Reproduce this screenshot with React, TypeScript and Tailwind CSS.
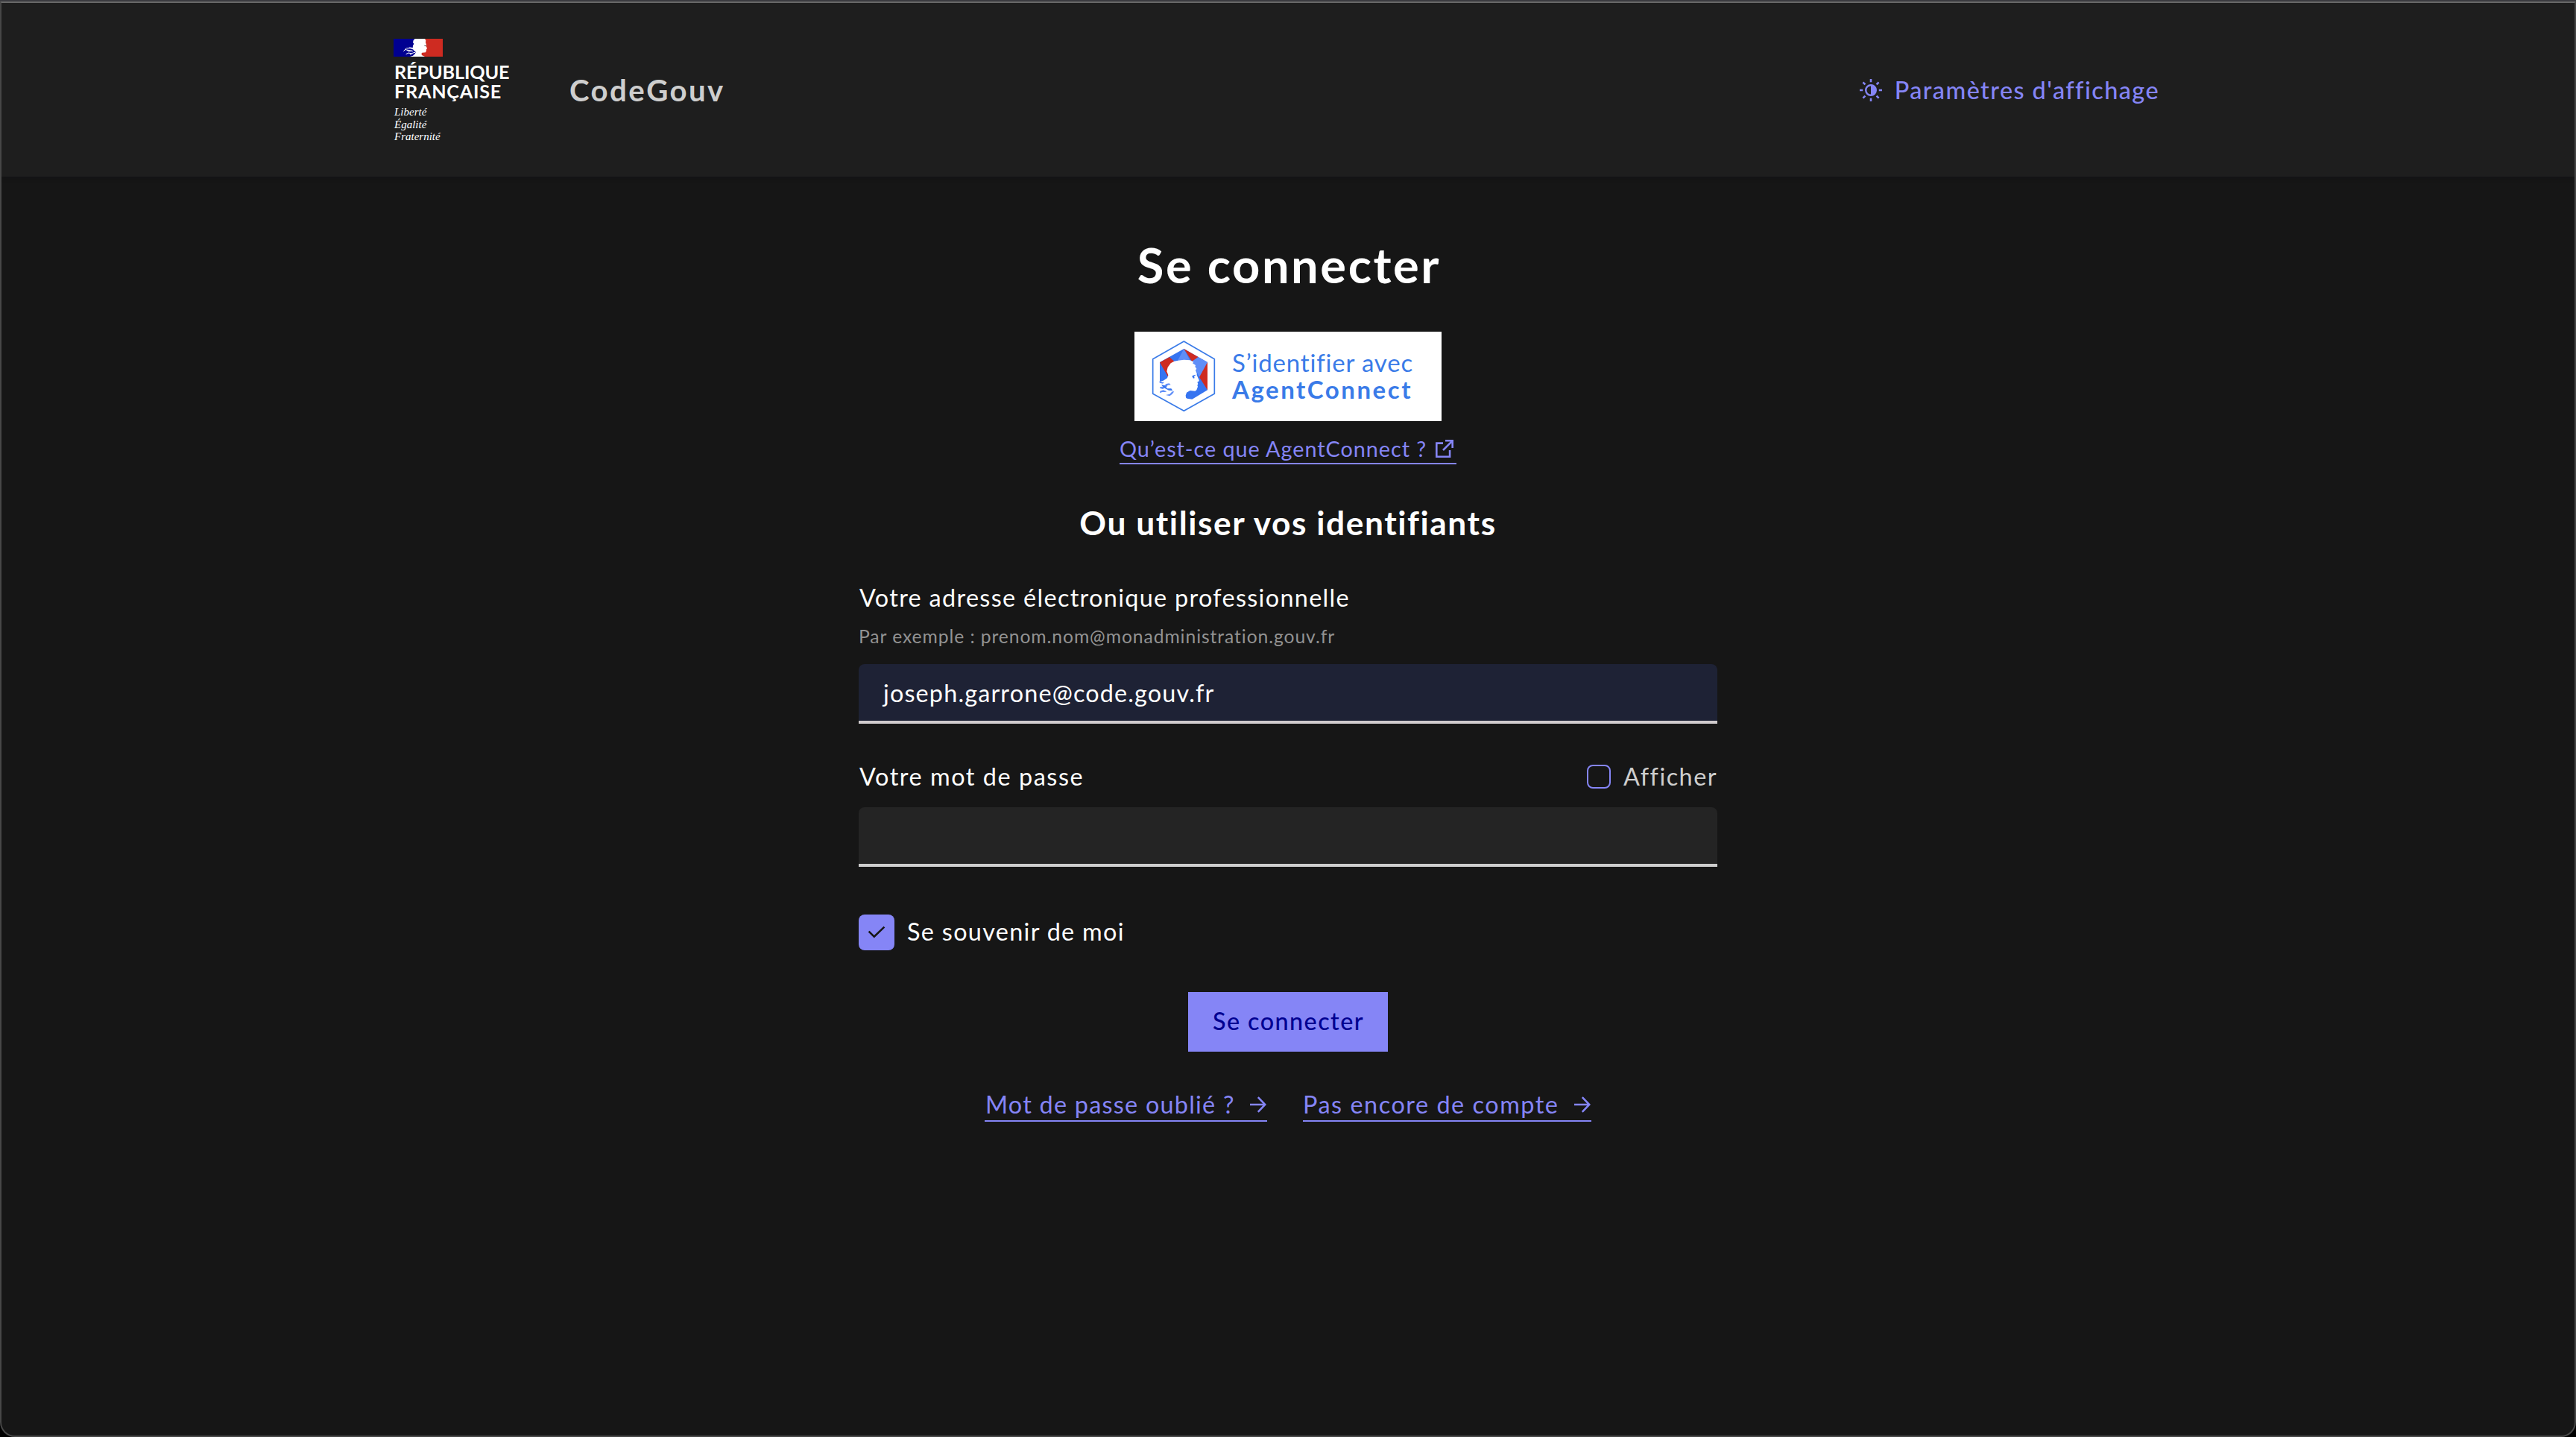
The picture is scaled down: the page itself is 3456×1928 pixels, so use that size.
import type { ReactNode } from "react";

function MarianneFlag() {
  return (
    <svg viewBox="0 0 198 72" className="block h-6 w-[66px]">
      <rect width="110" height="72" fill="#000091" />
      <rect x="108" width="90" height="72" fill="#ce2b21" />
      <path
        fill="#fff"
        d="M86 0H126L130 7L129 15L132 24L131 29L135 39L132 43L132 48L129 55L115 56L112 60L114 66L126 72H66L78 68L86 61L90 54L80 46L77 38L78 28L82 20L78 15L80 6Z"
      />
      <path fill="#444" d="M123 26l8 1-1 4-5-2z" />
      <path
        fill="none"
        stroke="#fff"
        strokeWidth="3"
        d="M40 50L52 38L66 38L80 42M46 44L60 46L78 50M54 46L62 51L74 48M50 62L60 57L74 60M62 36L70 36L80 38M66 64L78 57L88 55"
      />
    </svg>
  );
}

function ThemeIcon() {
  return (
    <svg viewBox="0 0 30 30" className="block size-[30px]" fill="none" stroke="#8585f6" strokeWidth="2.6">
      <circle cx="15" cy="15" r="6.8" strokeWidth="2.4" />
      <path d="M15 8a7 7 0 0 1 0 14z" fill="#8585f6" stroke="none" />
      <path d="M15 0v4.2M15 25.8V30M0 15h4.2M25.8 15H30M4.4 4.4l3 3M22.6 22.6l3 3M4.4 25.6l3-3M22.6 7.4l3-3" />
    </svg>
  );
}

function AgentConnectLogo() {
  return (
    <svg viewBox="0 0 300 330" className="block h-[110px] w-[100px]">
      <path d="M145 24L268 95V235L145 304L20 235V95Z" fill="#fff" stroke="#3a7be8" strokeWidth="5" />
      <path d="M48 108L145 54L240 108V220L178 257L158 254L48 190Z" fill="#3674f0" />
      <path d="M145 54L172 105H118Z" fill="#5f8ef8" />
      <path d="M48 109L87 87L112 110L82 168Z" fill="#ce2b21" />
      <path d="M145 54L203 87L178 106Z" fill="#ce2b21" />
      <path d="M203 87L240 108L209 172L176 106Z" fill="#5f8ef8" />
      <path d="M240 108V220L207 168Z" fill="#ce2b21" />
      <path
        fill="#fff"
        d="M122 101L145 98L170 100L184 107L180 112L192 120L190 126L196 134L192 140L197 152V160L206 180V184L199 188L202 195L199 201L201 206L196 220L190 224L170 222L156 230L152 242L154 254L162 262L120 258L46 215V186L62 182L78 172L82 160L76 145L80 128L92 112L106 104Z"
      />
      <path fill="#3674f0" d="M178 163l12-5 2 3-6 3 2 8-5 1-4-6z" />
      <path
        fill="#5f8ef8"
        d="M47 183L60 188H66L60 194L47 191ZM49 207L62 206L74 195L86 193L92 199L80 200L76 207L60 216L49 213ZM49 224L62 220L76 226L70 228L58 228L48 232ZM72 240L88 236L98 226L106 226L98 236L88 244Z"
      />
      <path fill="#3674f0" d="M54 198L68 202L78 214L94 214L100 222L84 221L70 214L60 206Z" />
    </svg>
  );
}

function ArrowIcon() {
  return (
    <svg viewBox="0 0 22 22" className="mr-px block size-[22px]" fill="none" stroke="#8585f6" strokeWidth="2.6">
      <path d="M0 11H19.5M10.8 1.2L20.3 11L10.8 20.8" />
    </svg>
  );
}

function ExternalIcon() {
  return (
    <svg viewBox="0 0 24 24" className="block size-6" fill="none" stroke="#8585f6" strokeWidth="2.6">
      <path d="M10 4.6H1.3V22.7H19.1V14M13 1.3H22.7V11M22.4 1.6L10 14" />
    </svg>
  );
}

function Link({ className, children }: { className: string; children: ReactNode }) {
  return (
    <a className={"flex items-center justify-between border-b-2 border-[#8585f6] text-[#8585f6] " + className}>
      {children}
    </a>
  );
}

export default function App() {
  return (
    <div className="h-[1928px] w-[3456px] overflow-hidden border-t-2 border-[#3b3b3f] bg-black font-['Lato',sans-serif] whitespace-nowrap">
      <div className="h-[1926px] overflow-hidden rounded-b-[20px] border-2 border-[#474747] border-t-[#686868] bg-[#161616]">
        <header className="flex h-[233px] items-start bg-[#1e1e1e] pl-[526px] shadow-[0_2px_6px_rgba(0,0,18,0.16)]">
          <div className="w-[236px] pt-12 text-white">
            <MarianneFlag />
            <p className="mt-[7px] pl-px text-[25.2px] leading-[26px] font-bold">
              <span className="block tracking-[-0.12px]">RÉPUBLIQUE</span>
              <span className="block tracking-[0.75px]">FRANÇAISE</span>
            </p>
            <p className="mt-[7px] pl-px font-['Liberation_Serif',serif] text-[15px] leading-[16.67px] italic">
              Liberté
              <br />
              Égalité
              <br />
              Fraternité
            </p>
          </div>
          <p className="pt-[85px] text-[40.2px] leading-[64px] font-bold tracking-[2.42px] text-[#cecece]">CodeGouv</p>
          <button className="ml-auto flex items-center gap-[17px] pt-[92px] pr-[557px] text-[#8585f6]">
            <ThemeIcon />
            <span className="text-[32.4px] leading-[50px] font-medium tracking-[1.43px]">Paramètres d'affichage</span>
          </button>
        </header>

        <main className="mx-auto flex w-[1152px] flex-col text-white">
          <h1 className="mt-[78px] pl-[3px] text-center text-[65px] leading-[80px] font-bold tracking-[2.58px]">
            Se connecter
          </h1>

          <button className="mt-[50px] flex h-[120px] w-[412px] self-center bg-white pt-[5px] pl-[18px] text-left text-[33px] leading-[36px] text-[#3a7be8]">
            <AgentConnectLogo />
            <span className="ml-[13px] pt-[18px]">
              <span className="block tracking-[0.81px]">S’identifier avec</span>
              <span className="block font-bold tracking-[2.51px]">AgentConnect</span>
            </span>
          </button>
          <Link className="mt-[17px] h-[41px] w-[452px] self-center pr-1 text-[28.8px] leading-[39px] tracking-[0.96px]">
            <span className="pt-[2px]">Qu’est-ce que AgentConnect ?</span>
            <ExternalIcon />
          </Link>

          <h2 className="mt-[50px] text-center text-[44.3px] leading-[56px] font-bold tracking-[1.56px]">
            Ou utiliser vos identifiants
          </h2>

          <label className="mt-[49px] pl-px text-[32.4px] leading-[48px] tracking-[1.32px]">
            Votre adresse électronique professionnelle
          </label>
          <p className="mt-2 text-[24.7px] leading-[40px] tracking-[0.91px] text-[#929292]">
            Par exemple : prenom.nom@monadministration.gouv.fr
          </p>
          <div className="mt-[17px] h-20 rounded-t-lg border-b-4 border-[#d0cbcd] bg-[#1e2235] pl-[33px] text-[32.4px] leading-[78px] tracking-[1.15px]">
            joseph.garrone@code.gouv.fr
          </div>

          <div className="mt-[47px] flex h-12 items-center justify-between text-[32.4px] leading-[48px]">
            <span className="pl-px tracking-[1.55px]">Votre mot de passe</span>
            <label className="flex items-center gap-[17px] tracking-[1.48px] text-[#cecece]">
              <span className="size-8 rounded-lg border-2 border-[#8585f6]" />
              Afficher
            </label>
          </div>
          <div className="mt-[17px] h-20 rounded-t-lg border-b-4 border-[#cecece] bg-[#242424]" />

          <label className="mt-16 flex h-12 gap-[17px] text-[32.4px] leading-[46px] tracking-[1.31px]">
            <span className="flex size-12 items-center justify-center rounded-lg bg-[#8585f6]">
              <svg viewBox="0 0 24 18" className="block h-[18px] w-6" fill="none" stroke="#161616" strokeWidth="2.6">
                <path d="M1.6 7.6L8.8 14.6L22.4 1.6" />
              </svg>
            </span>
            Se souvenir de moi
          </label>

          <button className="mt-14 h-20 w-[268px] self-center bg-[#8585f6] pb-[3px] pl-px text-[32.4px] leading-[77px] font-medium tracking-[1.41px] text-[#000091]">
            Se connecter
          </button>

          <div className="mt-[49px] flex justify-center gap-12 text-[32.4px] leading-[43px]">
            <Link className="h-[45px] w-[379px] pl-px tracking-[1.24px]">
              Mot de passe oublié ?
              <ArrowIcon />
            </Link>
            <Link className="h-[45px] w-[387px] tracking-[1.53px]">
              Pas encore de compte
              <ArrowIcon />
            </Link>
          </div>
        </main>
      </div>
    </div>
  );
}
